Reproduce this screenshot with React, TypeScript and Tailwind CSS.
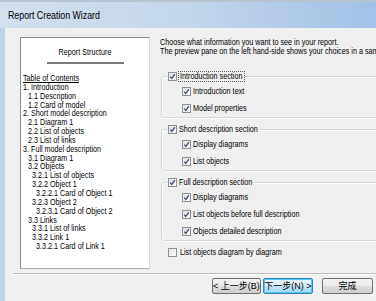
const ui = "font-['Liberation_Sans',Arial,sans-serif]";
const cjk = "font-['Liberation_Sans','Noto_Sans_CJK_SC',sans-serif]";

const toc: [number, string][] = [
  [0, '1. Introduction'],
  [1, '1.1 Description'],
  [1, '1.2 Card of model'],
  [0, '2. Short model description'],
  [1, '2.1 Diagram 1'],
  [1, '2.2 List of objects'],
  [1, '2.3 List of links'],
  [0, '3. Full model description'],
  [1, '3.1 Diagram 1'],
  [1, '3.2 Objects'],
  [2, '3.2.1 List of objects'],
  [2, '3.2.2 Object 1'],
  [3, '3.2.2.1 Card of Object 1'],
  [2, '3.2.3 Object 2'],
  [3, '3.2.3.1 Card of Object 2'],
  [1, '3.3 Links'],
  [2, '3.3.1 List of links'],
  [2, '3.3.2 Link 1'],
  [3, '3.3.2.1 Card of Link 1'],
];

const indent = ['pl-0', 'pl-[5px]', 'pl-[9px]', 'pl-[13px]'];

// the screenshot's font is narrower than anything installed, so squeeze it
function T({ children, center = false, u = false }: { children: React.ReactNode; center?: boolean; u?: boolean }) {
  return (
    <span
      className={`inline-block whitespace-nowrap scale-x-80 ${center ? 'origin-center' : 'origin-left'} ${
        u ? 'underline' : ''
      }`}
    >
      {children}
    </span>
  );
}

function Check({ on = true }: { on?: boolean }) {
  return (
    <svg width="9" height="9" viewBox="0 0 9 9" className="shrink-0">
      <defs>
        <linearGradient id="cbg" x1="0" y1="0" x2="1" y2="1">
          <stop offset="0" stopColor="#d9dde3" />
          <stop offset="1" stopColor="#ffffff" />
        </linearGradient>
      </defs>
      <rect x="0.5" y="0.5" width="8" height="8" fill="#f4f4f4" stroke="#8e8f8f" />
      <rect x="1.5" y="1.5" width="6" height="6" fill="url(#cbg)" />
      {on && <path d="M2.2 4.6 L3.8 6.4 L6.9 2.2" fill="none" stroke="#3f4f75" strokeWidth="1.3" />}
    </svg>
  );
}

function Item({ label, on = true }: { label: string; on?: boolean }) {
  return (
    <div className="flex h-[17px] items-center pl-[20px]">
      <Check on={on} />
      <span className="ml-[2px] w-0">
        <T>{label}</T>
      </span>
    </div>
  );
}

function Group({
  title,
  items,
  w,
  focus = false,
}: {
  title: string;
  items: string[];
  w: string;
  focus?: boolean;
}) {
  return (
    <div className="relative ml-[1px] rounded-[3px] border border-[#d3d7db] pt-[6px] shadow-[inset_1px_1px_0_#ffffff,1px_1px_0_#ffffff]">
      <div className="absolute -top-[7px] left-[5px] flex h-[12px] items-center bg-[#f0f0f0] pl-[1px]">
        <Check />
        <span
          className={`${w} h-[11px] overflow-visible leading-[9px] ${
            focus ? 'ml-[1px] border border-dotted border-[#5a5a5a] pl-[1px]' : 'ml-[2px] pt-[1px]'
          }`}
        >
          <T>{title}</T>
        </span>
      </div>
      {items.map((t) => (
        <Item key={t} label={t} />
      ))}
    </div>
  );
}

function Btn({ children, main = false, w }: { children: React.ReactNode; main?: boolean; w: string }) {
  return (
    <div
      className={`${w} flex h-[16px] items-center justify-center rounded-[2px] border text-[9px] leading-none text-black ${
        main
          ? 'border-[#3c7fb1] bg-[linear-gradient(#eaf6fd,#d9f0fc_50%,#bee6fd_51%,#a7d9f5)] shadow-[inset_0_0_0_1px_#48c7f4]'
          : 'border-[#707070] bg-[linear-gradient(#f2f2f2,#ebebeb_50%,#dddddd_51%,#cfcfcf)]'
      }`}
    >
      {children}
    </div>
  );
}

export default function App() {
  return (
    <div className={`relative h-[301px] w-[376px] overflow-hidden bg-[#f0f0f0] text-[9px] leading-[9px] text-black ${ui}`}>
      <div className="flex h-[28px] items-center border-t-[2px] border-[#b7c3cf] bg-[linear-gradient(90deg,#d3dfec,#c3d6ea_50%,#a3c1e6)] pl-[8px] text-[11px]">
        <T>Report Creation Wizard</T>
      </div>
      <div className="flex h-[273px]">
        <div className="w-[5px] shrink-0 bg-[#bcd2ea]" />
        <div className="flex min-w-0 flex-1 flex-col">
          <div className="ml-[15px] mt-[9px] flex">
            <div className="h-[232px] w-[130px] shrink-0 border border-b-[#b0b0b0] border-l-[#8a8a8a] border-r-[#dcdcdc] border-t-[#8a8a8a] bg-white px-[2px] pt-[10px]">
              <div className="text-center">
                <T center>Report Structure</T>
              </div>
              <div className="mx-auto mt-[5px] h-[2px] w-[77px] bg-[#7a7a7a]" />
              <div className="mt-[10px] leading-[8.85px]">
                <div>
                  <T u>Table of Contents</T>
                </div>
                {toc.map(([lvl, t]) => (
                  <div key={t} className={indent[lvl]}>
                    <T>{t}</T>
                  </div>
                ))}
              </div>
            </div>
            <div className="ml-[10px] w-[260px] shrink-0">
              <div className="pt-[1px]">
                <T>Choose what information you want to see in your report.</T>
              </div>
              <div>
                <T>The preview pane on the left hand-side shows your choices in a sample report.</T>
              </div>
              <div className="mt-[20px]">
                <Group
                  title="Introduction section"
                  items={['Introduction text', 'Model properties']}
                  w="w-[67px]"
                  focus
                />
              </div>
              <div className="mt-[11px]">
                <Group title="Short description section" items={['Display diagrams', 'List objects']} w="w-[80px]" />
              </div>
              <div className="mt-[11px]">
                <Group
                  title="Full description section"
                  items={['Display diagrams', 'List objects before full description', 'Objects detailed description']}
                  w="w-[74px]"
                />
              </div>
              <div className="mt-[3px] flex h-[17px] items-center pl-[8px]">
                <Check on={false} />
                <span className="ml-[3px]">
                  <T>List objects diagram by diagram</T>
                </span>
              </div>
            </div>
          </div>
          <div className="ml-[8px] mt-[4px] border-b border-t border-b-white border-t-[#bcbcbc]" />
          <div className={`ml-[207px] mt-[3px] flex ${cjk}`}>
            <Btn w="w-[49px]">&lt; 上一步(B)</Btn>
            <div className="ml-[2px]">
              <Btn w="w-[50px]" main>
                下一步(N) &gt;
              </Btn>
            </div>
            <div className="ml-[9px]">
              <Btn w="w-[51px]">完成</Btn>
            </div>
          </div>
        </div>
      </div>
    </div>
  );
}
